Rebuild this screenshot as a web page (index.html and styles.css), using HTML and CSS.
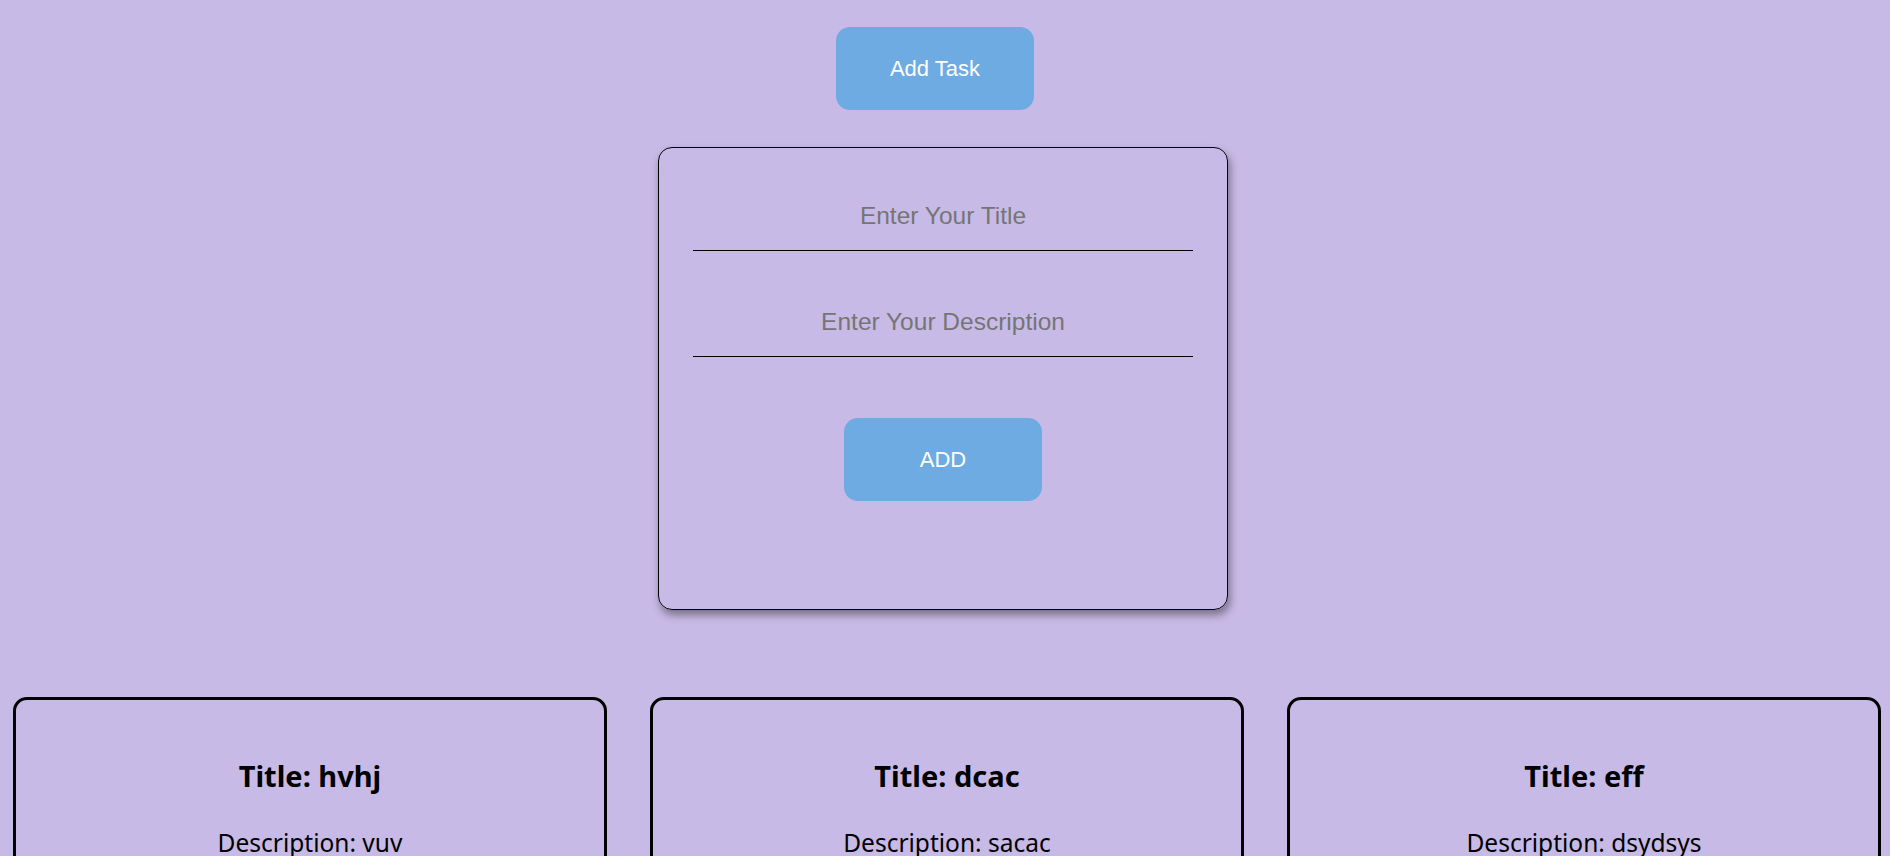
FILE: index.html
```html
<!DOCTYPE html>
<html lang="en">
<head>
<meta charset="utf-8">
<title>Tasks</title>
<link rel="stylesheet" href="styles.css">
</head>
<body>
<div class="app">
  <div class="top-bar">
    <button class="btn btn-toggle">Add Task</button>
  </div>
  <form class="task-form">
    <input class="field" type="text" placeholder="Enter Your Title">
    <input class="field field-desc" type="text" placeholder="Enter Your Description">
    <button class="btn btn-add" type="button">ADD</button>
  </form>
  <div class="task-list">
    <div class="task-card">
      <h2 class="task-title">Title: hvhj</h2>
      <p class="task-desc">Description: vuv</p>
    </div>
    <div class="task-card">
      <h2 class="task-title">Title: dcac</h2>
      <p class="task-desc">Description: sacac</p>
    </div>
    <div class="task-card">
      <h2 class="task-title">Title: eff</h2>
      <p class="task-desc">Description: dsydsys</p>
    </div>
  </div>
</div>
</body>
</html>
```
FILE: styles.css
```css
html, body {
  margin: 0;
  padding: 0;
  background: #c8bae6;
  overflow: hidden;
}

.app {
  display: flex;
  flex-direction: column;
  align-items: center;
  padding-top: 27px;
  font-family: "Liberation Sans", Arial, sans-serif;
}

.top-bar {
  display: flex;
  justify-content: center;
  width: 100%;
  padding-right: 20px;
  box-sizing: border-box;
}

.btn {
  width: 198px;
  height: 83px;
  border: none;
  border-radius: 14px;
  background: #6eabe3;
  color: #ffffff;
  font-family: "Liberation Sans", Arial, sans-serif;
  cursor: pointer;
}

.btn-toggle {
  font-size: 22px;
}

.task-form {
  margin-top: 37px;
  margin-right: 4px;
  width: 570px;
  box-sizing: border-box;
  border: 1px solid #000;
  border-radius: 14px;
  box-shadow: 2px 5px 9px rgba(0, 0, 0, 0.4);
  padding: 34px 35px 108px;
  display: flex;
  flex-direction: column;
  align-items: center;
}

.field {
  width: 500px;
  box-sizing: border-box;
  padding: 20px 0;
  line-height: 28px;
  height: 69px;
  border: none;
  border-bottom: 1px solid #000;
  background: transparent;
  font-family: "Liberation Sans", Arial, sans-serif;
  font-size: 24.5px;
  text-align: center;
  outline: none;
}

.field::placeholder {
  color: #757575;
}

.field-desc {
  margin-top: 37px;
}

.btn-add {
  margin-top: 61px;
  font-size: 22px;
}

.task-list {
  margin-top: 87px;
  width: 100%;
  box-sizing: border-box;
  padding-left: 13px;
  display: flex;
  gap: 43px;
}

.task-card {
  width: 594px;
  min-height: 320px;
  box-sizing: border-box;
  border: 3px solid #000;
  border-radius: 14px;
  padding-top: 56px;
  text-align: center;
  font-family: "Noto Sans", sans-serif;
}

.task-title {
  margin: 0;
  font-size: 29px;
  line-height: 40px;
  font-weight: 700;
  color: #000;
}

.task-desc {
  margin: 30px 0 0;
  font-size: 24.5px;
  line-height: 33px;
  color: #000;
}
```
